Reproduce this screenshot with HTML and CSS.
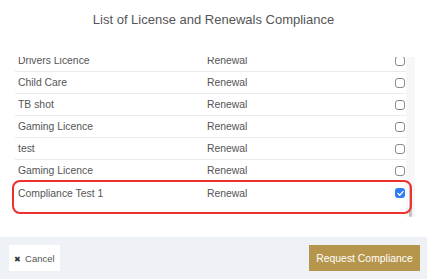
FILE: index.html
```html
<!DOCTYPE html>
<html lang="en">
<head>
  <meta charset="UTF-8">
  <title>License and Renewals</title>
  <link rel="stylesheet" href="styles.css">
</head>
<body>

  <!-- Modal -->
  <div class="modal">
    <div class="modal-header">
      <h2 class="modal-title">List of License and Renewals Compliance</h2>
    </div>

    <div class="modal-body">
      <div class="list-scroll">
        <div class="list">
          <div class="row"><span class="col-name">Drivers Licence</span><span class="col-type">Renewal</span><span class="col-check"><span class="checkbox"></span></span></div>
          <div class="row"><span class="col-name">Child Care</span><span class="col-type">Renewal</span><span class="col-check"><span class="checkbox"></span></span></div>
          <div class="row"><span class="col-name">TB shot</span><span class="col-type">Renewal</span><span class="col-check"><span class="checkbox"></span></span></div>
          <div class="row"><span class="col-name">Gaming Licence</span><span class="col-type">Renewal</span><span class="col-check"><span class="checkbox"></span></span></div>
          <div class="row"><span class="col-name">test</span><span class="col-type">Renewal</span><span class="col-check"><span class="checkbox"></span></span></div>
          <div class="row"><span class="col-name">Gaming Licence</span><span class="col-type">Renewal</span><span class="col-check"><span class="checkbox"></span></span></div>
          <div class="row row-last">
            <span class="col-name">Compliance Test 1</span><span class="col-type">Renewal</span>
            <span class="col-check">
              <span class="checkbox checked">
                <svg width="9" height="9" viewBox="0 0 9 9"><path d="M2 4.6 L3.7 6.2 L7 2.6" fill="none" stroke="#fff" stroke-width="1.4" stroke-linecap="round" stroke-linejoin="round"/></svg>
              </span>
            </span>
          </div>
        </div>
      </div>
      <div class="scrollbar"><div class="thumb"></div></div>

      <!-- highlight around selected row -->
      <div class="highlight"></div>
    </div>

    <div class="modal-footer">
      <button class="btn btn-cancel"><span class="x-icon">&#10006;</span> Cancel</button>
      <button class="btn btn-request">Request Compliance</button>
    </div>
  </div>

</body>
</html>
```

FILE: styles.css
```css
/* Global Styles */
body {
  font-family: 'Liberation Sans', Arial, sans-serif;
  margin: 0;
  padding: 0;
  background-color: #fff;
  color: #555;
}

/* Header */
.modal-header {
  height: 57px;
  padding-top: 11px;
  box-sizing: border-box;
}

.modal-title {
  margin: 0;
  text-align: center;
  font-size: 13px;
  font-weight: 400;
  line-height: 18px;
  color: #555;
}

/* Body with list */
.modal-body {
  position: relative;
  display: flex;
  height: 160px;
  padding-left: 15px;
}

.list-scroll {
  width: 391px;
  height: 160px;
  overflow: hidden;
}

.list {
  margin-top: -7px;
}

.row {
  display: flex;
  align-items: center;
  height: 21px;
  border-bottom: 1px solid #ebebeb;
  font-size: 10.4px;
  color: #555;
}

.row-last {
  align-items: flex-start;
  height: 36px;
  padding-top: 6px;
  box-sizing: border-box;
  border-bottom: none;
}

.col-name {
  width: 189px;
  padding-left: 3px;
}

.col-type {
  flex: 1;
}

.col-check {
  width: 10px;
  margin-right: 1px;
  display: flex;
}

.checkbox {
  display: inline-flex;
  align-items: center;
  justify-content: center;
  width: 8px;
  height: 8px;
  border: 1px solid #8a8a8a;
  border-radius: 3px;
}

.checkbox.checked {
  width: 10px;
  height: 10px;
  border: none;
  background-color: #2f7cf6;
}

.highlight {
  position: absolute;
  left: 12px;
  top: 123px;
  width: 396px;
  height: 30px;
  border: 2px solid #f0302c;
  border-radius: 8px;
}

/* Fake scrollbar */
.scrollbar {
  width: 9px;
  height: 160px;
  background-color: #f7f7f7;
  display: flex;
  flex-direction: column;
  justify-content: flex-end;
  align-items: center;
}

.thumb {
  width: 3px;
  height: 32px;
  background-color: #c4c4c4;
  border-radius: 2px;
}

/* Footer */
.modal-footer {
  display: flex;
  justify-content: space-between;
  align-items: center;
  margin-top: 20px;
  height: 42px;
  padding: 0 7px 0 9px;
  background-color: #eef1f6;
}

.btn {
  height: 26px;
  border: none;
  font-family: 'Liberation Sans', Arial, sans-serif;
  cursor: pointer;
}

.btn-cancel {
  width: 51px;
  padding: 0;
  background-color: #fff;
  color: #555;
  font-size: 9.5px;
}

.x-icon {
  font-size: 8px;
  color: #333;
  margin-right: 1px;
}

.btn-request {
  width: 111px;
  padding: 0;
  background-color: #b6964c;
  color: #fff;
  font-size: 10.4px;
}
```
